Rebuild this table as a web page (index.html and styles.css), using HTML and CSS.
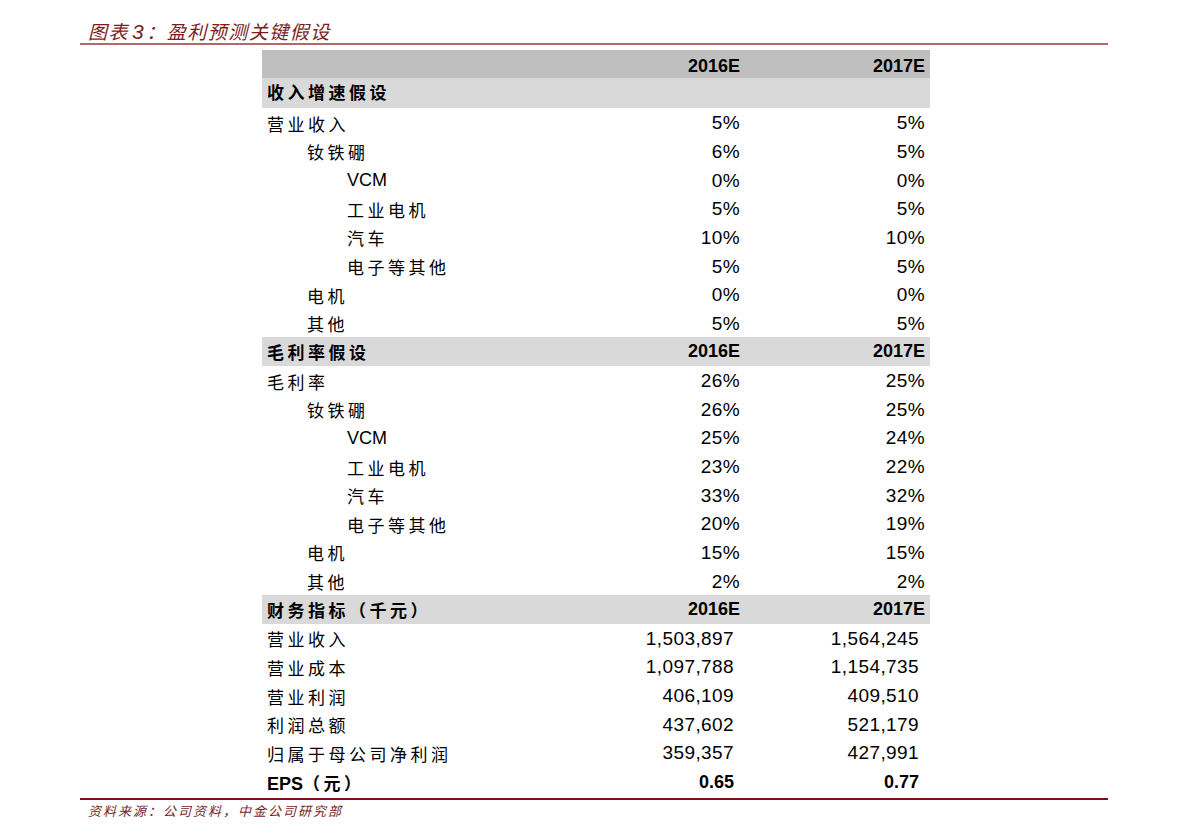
FILE: index.html
```html
<!DOCTYPE html>
<html lang="zh">
<head>
<meta charset="utf-8">
<title>盈利预测关键假设</title>
<link rel="stylesheet" href="styles.css">
</head>
<body>
<div class="page">
  <div class="title">图表<span class="num">3</span>：盈利预测关键假设</div>
  <div class="table">
    <div class="row head"><div class="lbl"></div><div class="val">2016E</div><div class="val">2017E</div></div>
    <div class="row sec first"><div class="lbl">收入增速假设</div><div class="val"></div><div class="val"></div></div>
    <div class="row"><div class="lbl">营业收入</div><div class="val">5%</div><div class="val">5%</div></div>
    <div class="row"><div class="lbl l1">钕铁硼</div><div class="val">6%</div><div class="val">5%</div></div>
    <div class="row"><div class="lbl l2 en">VCM</div><div class="val">0%</div><div class="val">0%</div></div>
    <div class="row"><div class="lbl l2">工业电机</div><div class="val">5%</div><div class="val">5%</div></div>
    <div class="row"><div class="lbl l2">汽车</div><div class="val">10%</div><div class="val">10%</div></div>
    <div class="row"><div class="lbl l2">电子等其他</div><div class="val">5%</div><div class="val">5%</div></div>
    <div class="row"><div class="lbl l1">电机</div><div class="val">0%</div><div class="val">0%</div></div>
    <div class="row"><div class="lbl l1">其他</div><div class="val">5%</div><div class="val">5%</div></div>
    <div class="row sec"><div class="lbl">毛利率假设</div><div class="val">2016E</div><div class="val">2017E</div></div>
    <div class="row"><div class="lbl">毛利率</div><div class="val">26%</div><div class="val">25%</div></div>
    <div class="row"><div class="lbl l1">钕铁硼</div><div class="val">26%</div><div class="val">25%</div></div>
    <div class="row"><div class="lbl l2 en">VCM</div><div class="val">25%</div><div class="val">24%</div></div>
    <div class="row"><div class="lbl l2">工业电机</div><div class="val">23%</div><div class="val">22%</div></div>
    <div class="row"><div class="lbl l2">汽车</div><div class="val">33%</div><div class="val">32%</div></div>
    <div class="row"><div class="lbl l2">电子等其他</div><div class="val">20%</div><div class="val">19%</div></div>
    <div class="row"><div class="lbl l1">电机</div><div class="val">15%</div><div class="val">15%</div></div>
    <div class="row"><div class="lbl l1">其他</div><div class="val">2%</div><div class="val">2%</div></div>
    <div class="row sec"><div class="lbl">财务指标（千元）</div><div class="val">2016E</div><div class="val">2017E</div></div>
    <div class="row fin"><div class="lbl">营业收入</div><div class="val">1,503,897</div><div class="val">1,564,245</div></div>
    <div class="row fin"><div class="lbl">营业成本</div><div class="val">1,097,788</div><div class="val">1,154,735</div></div>
    <div class="row fin"><div class="lbl">营业利润</div><div class="val">406,109</div><div class="val">409,510</div></div>
    <div class="row fin"><div class="lbl">利润总额</div><div class="val">437,602</div><div class="val">521,179</div></div>
    <div class="row fin"><div class="lbl">归属于母公司净利润</div><div class="val">359,357</div><div class="val">427,991</div></div>
    <div class="row fin eps"><div class="lbl"><span class="en">EPS</span>（元）</div><div class="val">0.65</div><div class="val">0.77</div></div>
  </div>
  <div class="footer">资料来源：公司资料，中金公司研究部</div>
</div>
</body>
</html>
```

FILE: styles.css
```css
html, body {
  margin: 0;
  padding: 0;
  background: #ffffff;
}

body {
  font-family: "Liberation Sans", Arial, "Noto Sans CJK SC", sans-serif;
  color: #000000;
}

.page {
  margin-left: 80px;
  width: 1028px;
  display: flex;
  flex-direction: column;
}

.title {
  height: 45px;
  box-sizing: border-box;
  padding: 19px 0 0 8px;
  font-family: "Noto Sans CJK SC", sans-serif;
  font-style: italic;
  font-size: 19px;
  line-height: 23px;
  letter-spacing: 1.5px;
  color: #7a1e1e;
  border-bottom: 2px solid #b06a6a;
}

.title .num {
  font-family: "Liberation Sans", Arial, sans-serif;
  font-size: 21px;
  margin: 0 1px 0 3px;
}

.table {
  margin: 5px 0 3px 182px;
  width: 668px;
  display: flex;
  flex-direction: column;
}

.row {
  display: grid;
  grid-template-columns: 298px 185px 185px;
  height: 28.65px;
  padding-top: 2px;
  box-sizing: border-box;
  align-items: center;
}

.row.head {
  height: 28px;
  padding-top: 4px;
  background: #bfbfbf;
}

.row.sec {
  background: #d9d9d9;
  padding-top: 0;
}

.row.sec.first {
  height: 30px;
  padding-top: 0;
  padding-bottom: 4px;
}

.lbl {
  padding-left: 5px;
  font-family: "Noto Sans CJK SC", sans-serif;
  font-size: 17px;
  letter-spacing: 3.5px;
  white-space: nowrap;
}

.lbl.l1 {
  padding-left: 45px;
}

.lbl.l2 {
  padding-left: 85px;
}

.en {
  font-family: "Liberation Sans", Arial, sans-serif;
  font-size: 18px;
  letter-spacing: 0;
}

.val {
  text-align: right;
  padding-right: 5px;
  font-size: 19px;
  letter-spacing: 0.4px;
}

.row.head .val,
.row.sec .val {
  font-weight: bold;
  font-size: 18px;
  letter-spacing: 0;
}

.row.sec .lbl {
  font-weight: bold;
}

.row.fin .val {
  padding-right: 11px;
}

.row.eps .lbl,
.row.eps .val {
  font-weight: bold;
  font-size: 18px;
  letter-spacing: 0;
}

.row.eps .lbl {
  font-size: 17px;
  letter-spacing: 3.5px;
}

.footer {
  border-top: 2px solid #7a1414;
  padding: 2px 0 0 8px;
  font-family: "Noto Sans CJK SC", sans-serif;
  font-style: italic;
  font-size: 13px;
  line-height: 18px;
  letter-spacing: 2px;
  color: #7a1e1e;
}
```
